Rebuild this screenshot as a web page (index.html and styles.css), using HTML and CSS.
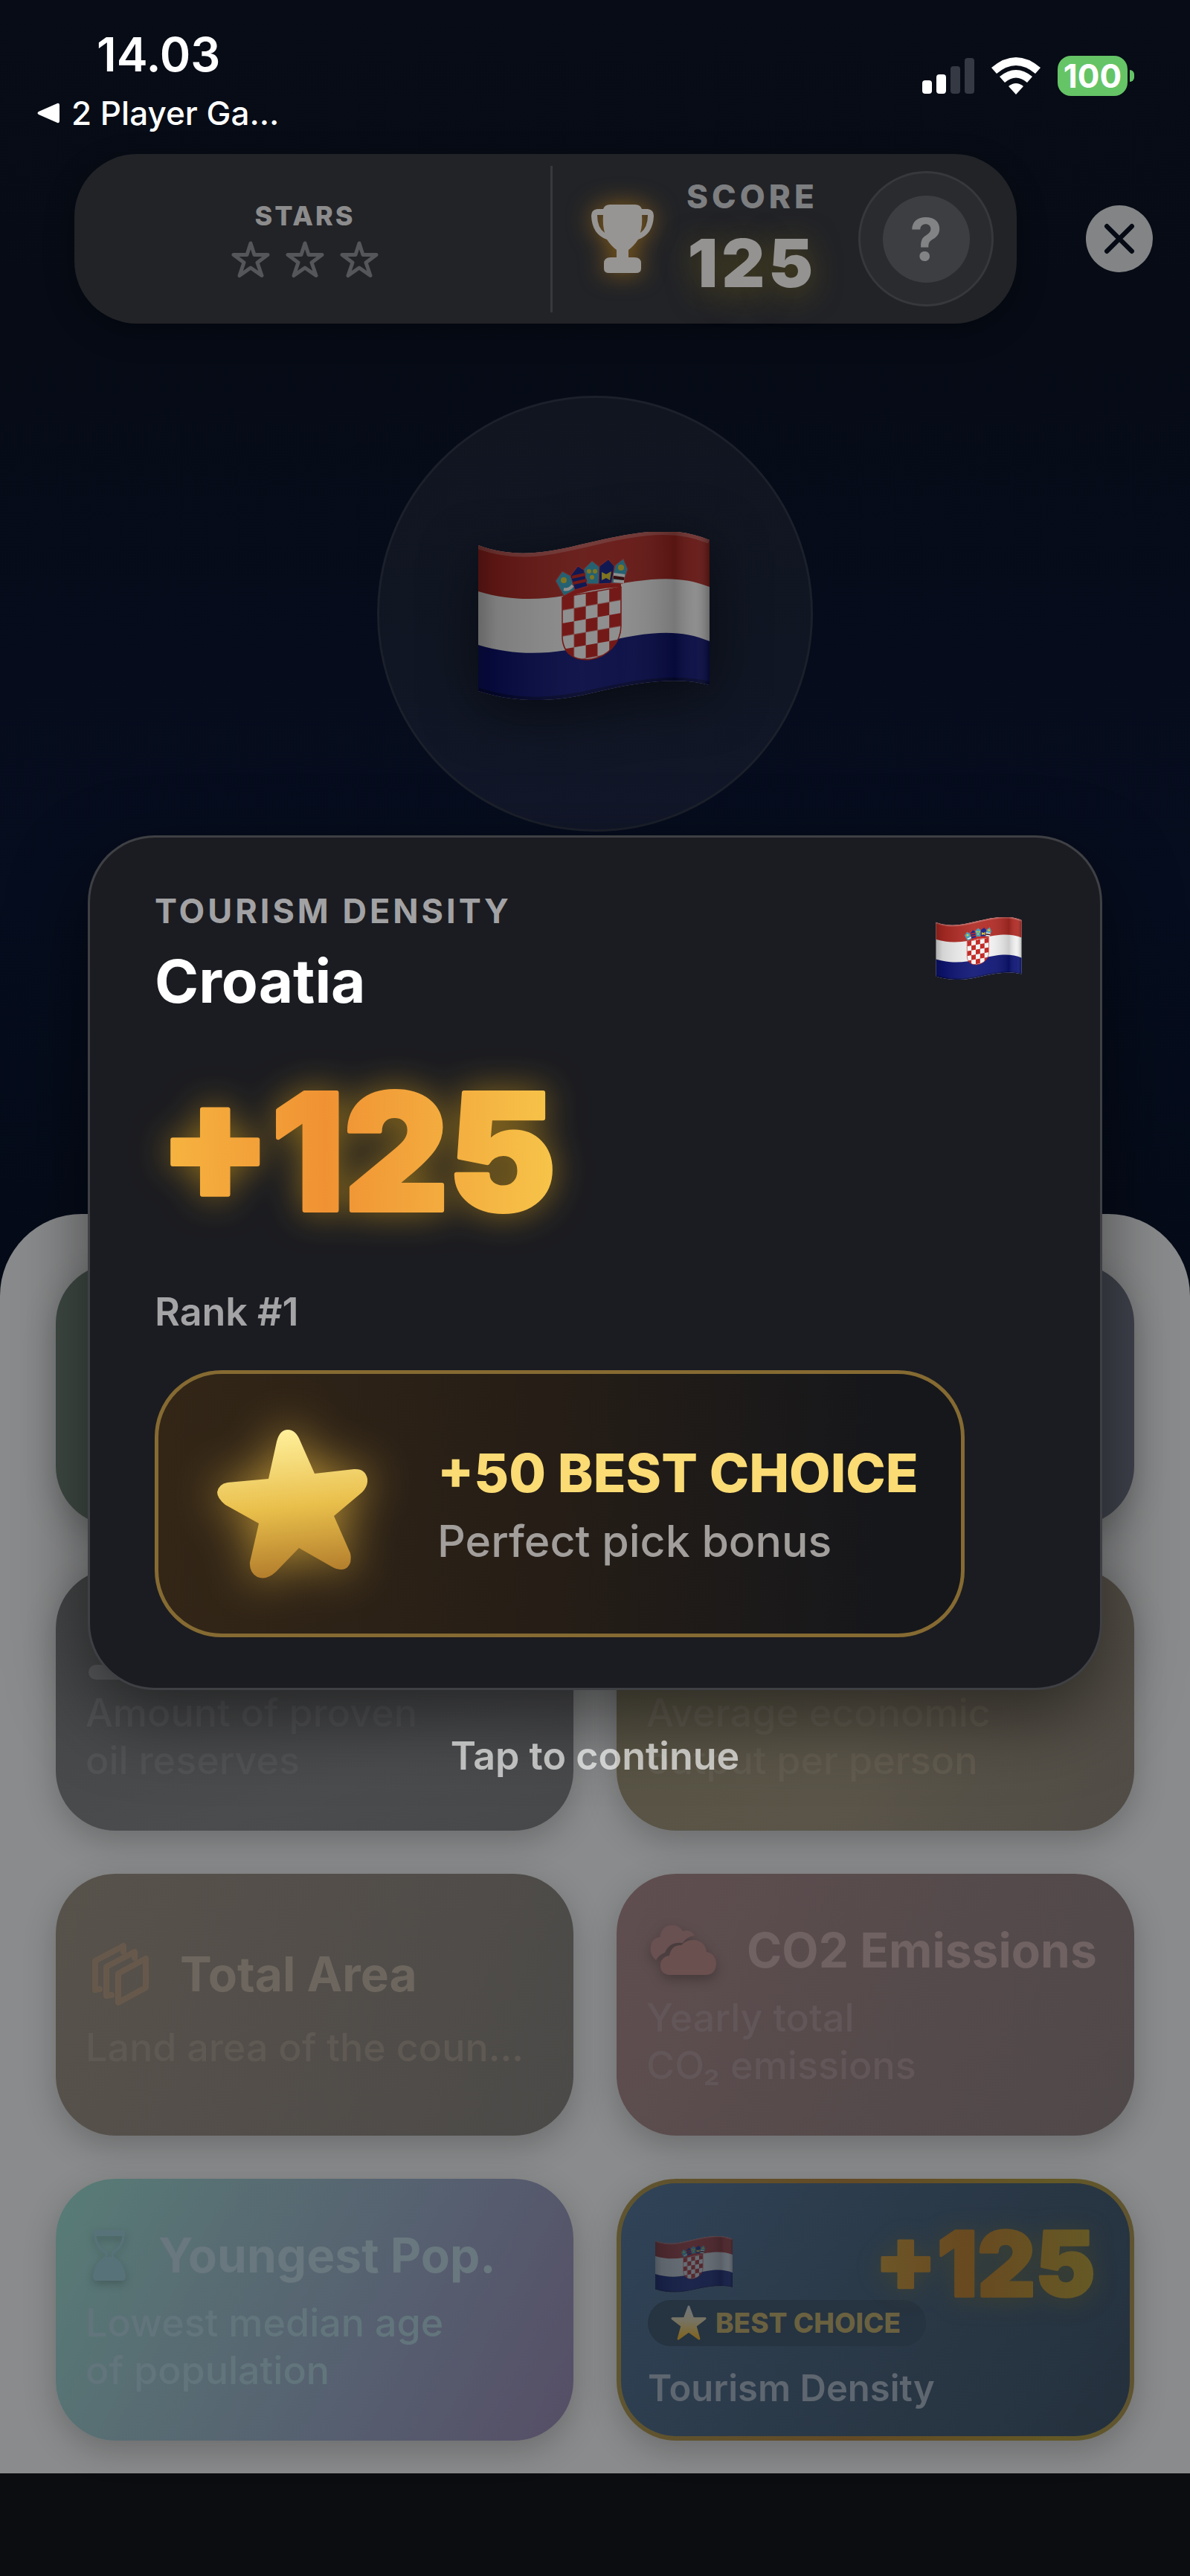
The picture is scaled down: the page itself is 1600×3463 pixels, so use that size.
FILE: index.html
```html
<!DOCTYPE html>
<html lang="en">
<head>
    <meta charset="UTF-8">
    <meta name="viewport" content="width=device-width, initial-scale=1.0">
    <title>Croatia +125</title>
    <link rel="stylesheet" href="styles.css">
</head>

<body>
    <!-- shared shapes -->
    <svg class="defs" width="0" height="0" aria-hidden="true">
        <defs>
            <linearGradient id="fold" x1="0" x2="1" y1="0" y2="0">
                <stop offset="0" stop-color="#000" stop-opacity=".28"/>
                <stop offset=".08" stop-color="#000" stop-opacity=".12"/>
                <stop offset=".45" stop-color="#fff" stop-opacity=".08"/>
                <stop offset=".62" stop-color="#fff" stop-opacity=".06"/>
                <stop offset=".85" stop-color="#000" stop-opacity=".16"/>
                <stop offset=".94" stop-color="#fff" stop-opacity=".06"/>
                <stop offset="1" stop-color="#000" stop-opacity=".25"/>
            </linearGradient>
            <clipPath id="wave">
                <path d="M0 18C60 40 110 23 160 12C230 -4 270 -6 311 11V206C270 195 220 201 160 215C100 230 50 230 0 214Z"/>
            </clipPath>
            <clipPath id="shield">
                <path d="M0 0H79V52C79 76 60 90 40 90C18 90 0 76 0 52Z"/>
            </clipPath>
            <pattern id="checks" width="31.6" height="35" patternUnits="userSpaceOnUse">
                <rect width="31.6" height="35" fill="#f2f2f2"/>
                <path d="M0 0H15.8V17.5H0ZM15.8 17.5H31.6V35H15.8Z" fill="#c32c28"/>
            </pattern>
            <symbol id="flag" viewBox="0 0 311 226">
                <g clip-path="url(#wave)">
                    <rect width="311" height="226" fill="#f1f1f1"/>
                    <path d="M0 0H311V74C270 58 230 61 160 76C110 89 60 98 0 80Z" fill="#b02a24"/>
                    <path d="M0 152C60 170 110 163 160 150C230 133 270 130 311 147V226H0Z" fill="#0d1474"/>
                    <path d="M0 18C60 40 110 23 160 12C230 -4 270 -6 311 11" fill="none" stroke="#fff" stroke-opacity=".22" stroke-width="10"/>
                    <path d="M311 206C270 195 220 201 160 215C100 230 50 230 0 214" fill="none" stroke="#000" stroke-opacity=".35" stroke-width="9"/>
                    <rect width="311" height="226" fill="url(#fold)"/>
                </g>
                <g transform="translate(113 88) skewY(-10)">
                    <rect width="79" height="90" fill="url(#checks)" clip-path="url(#shield)"/>
                    <path d="M0 0H79V52C79 76 60 90 40 90C18 90 0 76 0 52Z" fill="none" stroke="#c32c28" stroke-width="1.5"/>
                </g>
                <path d="M114 86Q150 68 192 70V74Q150 76 114 90Z" fill="#c32c28"/>
                <g stroke="#e0403a" stroke-width="1">
                    <path d="M104 66L113 53L126 60L130 78L115 86Z" fill="#3fa5c0"/>
                    <path d="M124 59L134 46L145 53L147 73L130 78Z" fill="#1c2a8c"/>
                    <path d="M142 50L153 39L164 48L163 70H146Z" fill="#3fa5c0"/>
                    <path d="M163 46L175 37L183 46L180 69L162 70Z" fill="#1c2a8c"/>
                    <path d="M184 45L195 36L201 50L195 69L179 69Z" fill="#3fa5c0"/>
                </g>
                <path d="M126 61L144 57M128 69L146 65" stroke="#c32c28" stroke-width="4"/>
                <path d="M115 77Q122 79 127 72M182 66L196 67M182 57L197 59" stroke="#f1f1f1" stroke-width="4" fill="none"/>
                <path d="M182 61L196 63" stroke="#5c1a1a" stroke-width="4"/>
                <g fill="#d8c437">
                    <circle cx="115" cy="65" r="4"/>
                    <circle cx="192" cy="48" r="4"/>
                    <path d="M166 54L172 57L179 53L177 65L172 62L166 65Z"/>
                    <circle cx="149" cy="53" r="3"/>
                    <circle cx="157" cy="53" r="3"/>
                    <circle cx="153" cy="61" r="3"/>
                </g>
            </symbol>
            <symbol id="star-line" viewBox="0 0 52 50">
                <path d="M26 3L31 18.500H49L35 29L41 46.500L26 36L11 46.500L17 29L3 18.500H21Z" fill="none" stroke="currentColor" stroke-width="5" stroke-linejoin="round"/>
            </symbol>
            <linearGradient id="gold" x1="0" x2="538" y1="0" y2="0" gradientUnits="userSpaceOnUse">
                <stop offset="0" stop-color="#f6b440"/>
                <stop offset=".4" stop-color="#f09233"/>
                <stop offset="1" stop-color="#f7c64a"/>
            </linearGradient>
            <linearGradient id="gold-dim" x1="0" x2="538" y1="0" y2="0" gradientUnits="userSpaceOnUse">
                <stop offset="0" stop-color="#6d5628"/>
                <stop offset=".4" stop-color="#684920"/>
                <stop offset="1" stop-color="#655a26"/>
            </linearGradient>
            <linearGradient id="star-fill" x1=".45" x2=".55" y1="0" y2="1">
                <stop offset="0" stop-color="#fff09a"/>
                <stop offset=".25" stop-color="#f4d876"/>
                <stop offset=".52" stop-color="#e9bf4b"/>
                <stop offset="1" stop-color="#b07a2b"/>
            </linearGradient>
            <linearGradient id="star-dim" x1="0" x2="0" y1="0" y2="1">
                <stop offset="0" stop-color="#6f7479"/>
                <stop offset=".45" stop-color="#777361"/>
                <stop offset="1" stop-color="#80631f"/>
            </linearGradient>
        </defs>
    </svg>

    <div class="phone">
        <header class="status-bar">
            <div class="status-left">
                <p class="clock">14.03</p>
                <a class="back-app" href="#">
                    <svg viewBox="0 0 30 28"><path d="M27 1Q30 0 30 4V24Q30 28 27 27L2 16Q-1 14 2 12Z" fill="#fff"/></svg>
                    2 Player Ga...
                </a>
            </div>
            <div class="status-right">
                <svg class="signal" viewBox="0 0 70 48">
                    <rect y="30" width="13" height="18" rx="4" fill="#fff"/>
                    <rect x="19" y="22" width="13" height="26" rx="4" fill="#fff"/>
                    <rect x="38" y="11" width="13" height="37" rx="4" fill="#353943"/>
                    <rect x="57" width="13" height="48" rx="4" fill="#353943"/>
                </svg>
                <svg class="wifi" viewBox="0 0 68 50">
                    <path d="M1 14Q34 -14 67 14L60 22Q34 0 8 22Z" fill="#fff"/>
                    <path d="M12 26Q34 8 56 26L49 34Q34 21 19 34Z" fill="#fff"/>
                    <path d="M24 39Q34 31 44 39L34 50Z" fill="#fff"/>
                </svg>
                <div class="battery"><span class="battery-level">100</span></div>
            </div>
        </header>

        <div class="top-row">
            <section class="hud">
                <div class="hud-stars">
                    <h2 class="hud-title small">STARS</h2>
                    <div class="star-row">
                        <svg><use href="#star-line"/></svg>
                        <svg><use href="#star-line"/></svg>
                        <svg><use href="#star-line"/></svg>
                    </div>
                </div>
                <div class="hud-score">
                    <svg class="trophy" viewBox="0 0 84 92">
                        <path d="M16 6Q18 0 25 0H59Q66 0 68 6H76Q84 7 84 15Q83 40 63 47Q57 56 50 61V71H58Q67 71 67 79V86Q67 92 60 92H24Q17 92 17 86V79Q17 71 26 71H34V61Q27 56 21 47Q1 40 0 15Q0 7 8 6ZM16 14H8Q8 31 18 38Q15 27 16 14ZM68 14Q69 27 66 38Q76 31 76 14Z" fill="#979593" fill-rule="evenodd"/>
                    </svg>
                    <div class="score-text">
                        <h2 class="hud-title">SCORE</h2>
                        <p class="score-value">125</p>
                    </div>
                    <button class="help" type="button"><span>?</span></button>
                </div>
            </section>
            <button class="close" type="button" aria-label="Close">
                <svg viewBox="0 0 40 40"><path d="M4 4L36 36M36 4L4 36" stroke="#060a14" stroke-width="6" stroke-linecap="round"/></svg>
            </button>
        </div>

        <div class="country-circle">
            <svg class="country-flag"><use href="#flag"/></svg>
        </div>

        <main class="sheet">
            <button class="card green" type="button" aria-label="Category"></button>
            <button class="card slate" type="button" aria-label="Category"></button>

            <button class="card oil" type="button">
                <span class="card-head">
                    <svg class="icon-oil" viewBox="0 0 60 60"><rect y="40" width="60" height="20" rx="10" fill="#5b5c5e"/></svg>
                </span>
                <span class="card-text">Amount of proven<br>oil reserves</span>
            </button>
            <button class="card economy" type="button">
                <span class="card-head"></span>
                <span class="card-text">Average economic<br>output per person</span>
            </button>

            <button class="card area" type="button">
                <span class="card-head tall">
                    <svg class="icon-area" viewBox="0 0 76 84">
                        <g fill="none" stroke="#66594c" stroke-width="8" stroke-linejoin="round" stroke-linecap="round">
                            <path d="M10 62L4 63V24L42 4V12"/>
                            <path d="M26 70L19 71V32L57 12V20"/>
                            <path d="M35 41L72 21V60L35 80Z"/>
                        </g>
                    </svg>
                    <span class="card-title">Total Area</span>
                </span>
                <span class="card-text">Land area of the coun...</span>
            </button>
            <button class="card emissions" type="button">
                <span class="card-head">
                    <svg class="icon-cloud" viewBox="0 0 90 68">
                        <path d="M8 47Q-3 38 2 24Q5 17 13 16Q16 0 30 0Q39 0 44 8Q55 5 60 14Q50 15 44 24Q26 22 20 37Q12 40 8 47Z" fill="#695051"/>
                        <path d="M25 67Q13 65 14 52Q16 42 26 41Q29 26 42 27Q49 19 60 20Q74 22 76 36Q88 38 89 52Q88 66 76 67Z" fill="#6a504f"/>
                    </svg>
                    <span class="card-title">CO2 Emissions</span>
                </span>
                <span class="card-text">Yearly total<br>CO₂ emissions</span>
            </button>

            <button class="card young" type="button">
                <span class="card-head">
                    <svg class="icon-glass" viewBox="0 0 46 68">
                        <path d="M2 0H44V8H2Z" fill="#587279"/>
                        <path d="M4 8Q5 22 19 31V36Q3 46 3 62H43Q43 46 27 36V31Q41 22 42 8" fill="none" stroke="#587279" stroke-width="3"/>
                        <path d="M23 35Q2 48 1 62Q1 68 6 68H40Q45 68 45 62Q44 48 23 35Z" fill="#587279"/>
                    </svg>
                    <span class="card-title">Youngest Pop.</span>
                </span>
                <span class="card-text">Lowest median age<br>of population</span>
            </button>
            <button class="card picked" type="button">
                <span class="picked-top">
                    <svg class="picked-flag"><use href="#flag"/></svg>
                    <svg class="points points-small" viewBox="0 0 538 162">
                        <text x="-8" y="158" fill="url(#gold-dim)" stroke="url(#gold-dim)">+125</text>
                    </svg>
                </span>
                <span class="badge">
                    <svg viewBox="0 0 52 50"><path d="M26 2L32 18.500H49L35.500 29L40.500 47L26 36.500L11.500 47L16.500 29L3 18.500H20Z" fill="url(#star-dim)" stroke="url(#star-dim)" stroke-width="3" stroke-linejoin="round"/></svg>
                    BEST CHOICE
                </span>
                <span class="picked-name">Tourism Density</span>
            </button>
        </main>

        <!-- result popup -->
        <div class="overlay">
            <section class="modal">
                <div class="modal-head">
                    <div>
                        <h2 class="modal-label">TOURISM DENSITY</h2>
                        <h1 class="modal-country">Croatia</h1>
                    </div>
                    <svg class="modal-flag"><use href="#flag"/></svg>
                </div>
                <svg class="points" viewBox="0 0 538 162">
                    <text x="-8" y="158" fill="url(#gold)" stroke="url(#gold)">+125</text>
                </svg>
                <p class="rank">Rank #1</p>
                <div class="bonus">
                    <svg class="bonus-star" viewBox="0 0 202 200">
                        <path d="M69 66L80 16Q84 0 95 0Q106 0 112 16L131 59L184 53Q199 52 202 66Q203 76 195 84L157 116L179 166Q182 182 172 187Q163 190 152 183L110 159L79 191Q66 203 54 198Q43 192 44 178L56 126L11 101Q0 92 0 84Q2 73 14 71Z" fill="url(#star-fill)"/>
                    </svg>
                    <div>
                        <p class="bonus-title">+50 BEST CHOICE</p>
                        <p class="bonus-text">Perfect pick bonus</p>
                    </div>
                </div>
            </section>
            <button class="continue" type="button">Tap to continue</button>
        </div>
    </div>
</body>
</html>
```
FILE: styles.css
```css
/* Global Styles */
* {
    box-sizing: border-box;
    margin: 0;
    padding: 0;
}

body {
    font-family: Inter, "Liberation Sans", sans-serif;
    background-color: #0c0d10;
    color: #fff;
}

button {
    font-family: inherit;
    border: none;
    background: none;
    color: inherit;
    cursor: pointer;
}

svg {
    display: block;
    flex: none;
}

.defs {
    position: absolute;
}

.phone {
    position: relative;
    min-height: 100vh;
    overflow: hidden;
    background: linear-gradient(#070c16 0, #060b15 400px, #060c1c 900px, #060d1e 1200px, #050b18 1700px, #0c0d10 1800px);
}

/* Status bar */
.status-bar {
    display: flex;
    justify-content: space-between;
    height: 207px;
    padding: 34px 75px 0 50px;
}

.clock {
    margin-left: 80px;
    font-size: 63px;
    line-height: 78px;
    font-weight: 600;
}

.back-app {
    display: flex;
    align-items: center;
    gap: 16px;
    margin-top: 12px;
    font-size: 44px;
    line-height: 56px;
    font-weight: 500;
    color: #fff;
    text-decoration: none;
}

.back-app svg {
    width: 30px;
    height: 28px;
}

.status-right {
    display: flex;
    align-items: center;
    gap: 22px;
    height: 54px;
    margin-top: 41px;
}

.signal {
    width: 70px;
    height: 48px;
}

.wifi {
    width: 68px;
    height: 50px;
}

.battery {
    display: flex;
    align-items: center;
    gap: 3px;
}

.battery::after {
    content: "";
    width: 6px;
    height: 16px;
    border-radius: 0 8px 8px 0;
    background-color: #65c466;
}

.battery-level {
    width: 94px;
    border-radius: 18px;
    background-color: #65c466;
    font-size: 44px;
    line-height: 54px;
    font-weight: 700;
    text-align: center;
}

/* Score bar */
.top-row {
    display: flex;
    align-items: center;
    gap: 93px;
    padding: 0 50px 0 100px;
}

.hud {
    display: grid;
    grid-template-columns: 1fr 627px;
    align-items: center;
    flex: 1;
    height: 228px;
    border-radius: 84px;
    background-color: #222327;
    box-shadow: 0 12px 40px rgba(0, 0, 0, 0.3);
}

.hud-stars, .hud-score {
    display: flex;
    align-items: center;
    height: 197px;
}

.hud-stars {
    flex-direction: column;
    justify-content: center;
    gap: 12px;
    padding-right: 20px;
}

.hud-title {
    font-size: 44px;
    line-height: 52px;
    font-weight: 800;
    letter-spacing: 5px;
    color: #7d7e80;
}

.hud-title.small {
    font-size: 36px;
    line-height: 44px;
    letter-spacing: 3px;
    color: #8c8c8d;
}

.star-row {
    display: flex;
    gap: 21px;
    color: #55565a;
}

.star-row svg {
    width: 52px;
    height: 50px;
}

.hud-score {
    padding: 0 31px 0 52px;
    border-left: 3px solid #38393d;
}

.trophy {
    width: 84px;
    height: 92px;
    filter: drop-shadow(0 0 16px rgba(176, 120, 20, 0.7));
}

.score-text {
    margin-left: 44px;
}

.score-value {
    margin-top: 14px;
    font-size: 90px;
    line-height: 100px;
    font-weight: 900;
    letter-spacing: 5px;
    text-align: center;
    color: #949391;
    text-shadow: 0 8px 40px rgba(130, 110, 20, 0.5);
}

.help {
    display: flex;
    align-items: center;
    justify-content: center;
    width: 182px;
    height: 182px;
    margin-left: auto;
    border: 3px solid #37383b;
    border-radius: 50%;
    background-color: #2a2b2e;
}

.help span {
    width: 117px;
    border-radius: 50%;
    background-color: #3d3e41;
    font-size: 78px;
    line-height: 117px;
    font-weight: 700;
    color: #828385;
}

.close {
    display: flex;
    align-items: center;
    justify-content: center;
    width: 90px;
    height: 90px;
    border-radius: 50%;
    background-color: #828485;
}

.close svg {
    width: 42px;
    height: 42px;
}

/* Country flag */
.country-circle {
    display: flex;
    align-items: center;
    justify-content: center;
    width: 586px;
    height: 586px;
    margin: 97px auto 0;
    padding: 6px 4px 0 0;
    border: 3px solid #1b202b;
    border-radius: 50%;
    background: linear-gradient(#111520, #101623 60%, #12172a);
}

.country-flag {
    width: 311px;
    height: 226px;
    filter: brightness(0.59) drop-shadow(0 16px 36px rgba(0, 0, 0, 0.5));
}

/* Category sheet */
.sheet {
    display: grid;
    grid-template-columns: 1fr 1fr;
    gap: 58px;
    margin-top: 514px;
    margin-bottom: 139px;
    padding: 67px 75px 44px;
    border-radius: 110px 110px 0 0;
    background-color: #8a8b8c;
}

.card {
    display: flex;
    flex-direction: column;
    justify-content: center;
    gap: 19px;
    height: 352px;
    padding: 0 40px;
    border-radius: 80px;
    text-align: left;
    white-space: nowrap;
    box-shadow: 0 14px 44px rgba(0, 0, 0, 0.22);
}

.card-head {
    display: flex;
    align-items: center;
    height: 80px;
}

.card-head.tall {
    height: 96px;
}

.card-title {
    font-size: 64px;
    line-height: 80px;
    font-weight: 700;
}

.card-text {
    font-size: 52px;
    line-height: 64px;
    font-weight: 500;
}

.green {
    background-color: #3f4a44;
}

.slate {
    background-color: #40434d;
}

.oil {
    background: linear-gradient(160deg, #434445, #4b4c4e 70%, #474849);
    color: #525355;
}

.economy {
    background: linear-gradient(120deg, #575342, #5b5549 50%, #504c46);
    color: #625c50;
}

.area {
    background: linear-gradient(110deg, #57524a, #534e4a 45%, #4b4a48);
}

.area .card-title {
    color: #6c665e;
}

.area .card-text {
    color: #5f5953;
}

.emissions {
    background: linear-gradient(115deg, #604e50, #574b4c 45%, #4f4849);
}

.emissions .card-title {
    color: #706263;
}

.emissions .card-text {
    color: #635658;
}

.young {
    background: linear-gradient(118deg, #587d77, #586e73 28%, #565f70 62%, #564e66);
}

.young .card-title {
    color: #69777f;
}

.young .card-text {
    color: #62757c;
}

.icon-oil {
    width: 60px;
    height: 60px;
    margin: 32px 0 0 4px;
}

.icon-area {
    width: 76px;
    height: 84px;
    margin: 0 42px 0 9px;
}

.icon-cloud {
    width: 90px;
    height: 68px;
    margin: 0 40px 0 5px;
    filter: drop-shadow(0 6px 8px rgba(0, 0, 0, 0.25));
}

.icon-glass {
    width: 46px;
    height: 68px;
    margin: 0 43px 0 9px;
    filter: drop-shadow(0 5px 6px rgba(0, 0, 0, 0.2));
}

/* Picked card */
.picked {
    align-items: flex-start;
    justify-content: flex-start;
    gap: 0;
    padding: 60px 36px 0;
    border: 6px solid transparent;
    background:
        linear-gradient(125deg, #304358, #2b3a49 45%, #24303c) padding-box,
        linear-gradient(90deg, #5f5530, #634a26 45%, #635826 85%, #5f5430) border-box;
}

.picked-top {
    display: flex;
    align-items: center;
    justify-content: space-between;
    align-self: stretch;
    height: 97px;
    padding: 0 3px 0 10px;
}

.picked-flag {
    width: 104px;
    height: 76px;
    opacity: 0.6;
    filter: brightness(0.58);
}

.badge {
    display: flex;
    align-items: center;
    gap: 11px;
    height: 62px;
    padding: 0 34px 0 30px;
    border-radius: 31px;
    background-color: #263340;
    font-size: 37px;
    line-height: 44px;
    font-weight: 800;
    color: #6a6140;
}

.badge svg {
    width: 50px;
    height: 48px;
}

.picked-name {
    margin-top: 25px;
    font-size: 49px;
    line-height: 64px;
    font-weight: 600;
    color: #5e6670;
}

/* Result popup */
.overlay {
    position: absolute;
    inset: 0;
    display: flex;
    flex-direction: column;
    align-items: center;
    padding: 1123px 118px 0;
}

.modal {
    align-self: stretch;
    padding: 72px 87px 68px;
    border: 3px solid rgba(255, 255, 255, 0.16);
    border-radius: 90px;
    background: #1b1c21 border-box;
    box-shadow: 0 36px 100px rgba(0, 0, 0, 0.5);
}

.modal-head {
    display: flex;
    align-items: flex-start;
    justify-content: space-between;
    padding-right: 18px;
}

.modal-label {
    font-size: 45px;
    line-height: 54px;
    font-weight: 700;
    letter-spacing: 4px;
    color: #a2a2a4;
}

.modal-country {
    margin-top: 19px;
    font-size: 80px;
    line-height: 96px;
    font-weight: 700;
}

.modal-flag {
    width: 116px;
    height: 84px;
    margin-top: 35px;
}

.points {
    width: 538px;
    height: 162px;
    margin: 102px 0 101px 14px;
    overflow: visible;
    font-size: 217px;
    font-weight: 900;
    stroke-width: 6px;
    stroke-linejoin: round;
    filter: drop-shadow(0 0 24px rgba(214, 158, 25, 0.6));
}

.points-small {
    width: 300px;
    height: 90px;
    margin: 0;
    filter: drop-shadow(0 4px 16px rgba(90, 80, 20, 0.4));
}

.rank {
    font-size: 52px;
    line-height: 64px;
    font-weight: 600;
    color: #a4a4a6;
}

.bonus {
    display: flex;
    align-items: center;
    gap: 94px;
    width: fit-content;
    height: 359px;
    margin-top: 46px;
    padding: 0 57px 0 79px;
    border: 5px solid #856a32;
    border-radius: 90px;
    background: linear-gradient(90deg, #332617, #251d16 50%, #16171b 90%);
}

.bonus-star {
    width: 202px;
    height: 200px;
    filter: drop-shadow(0 0 32px rgba(226, 176, 60, 0.75));
}

.bonus-title {
    font-size: 72px;
    line-height: 88px;
    font-weight: 800;
    color: #fadb74;
}

.bonus-text {
    margin-top: 12px;
    font-size: 59px;
    line-height: 72px;
    font-weight: 500;
    color: #a19e9c;
}

.continue {
    margin-top: 57px;
    font-size: 52px;
    line-height: 64px;
    font-weight: 600;
    color: rgba(255, 255, 255, 0.65);
}
```
